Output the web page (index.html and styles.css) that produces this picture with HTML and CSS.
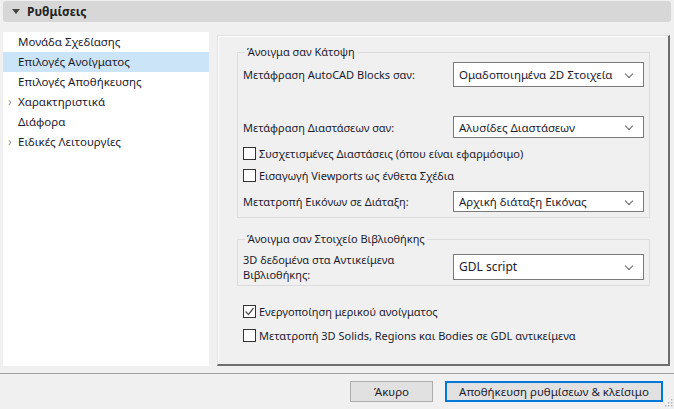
FILE: index.html
```html
<!DOCTYPE html>
<html lang="el">
<head>
    <meta charset="UTF-8">
    <title>Ρυθμίσεις</title>
    <link rel="stylesheet" href="styles.css">
</head>
<body>
    <div class="header">
        <svg class="caret" width="8" height="5" viewBox="0 0 8 5"><path d="M0 0h8L4 5z" fill="#444"/></svg>
        <span>Ρυθμίσεις</span>
    </div>

    <div class="main">
        <ul class="nav">
            <li>Μονάδα Σχεδίασης</li>
            <li class="active">Επιλογές Ανοίγματος</li>
            <li>Επιλογές Αποθήκευσης</li>
            <li class="has-sub">Χαρακτηριστικά</li>
            <li>Διάφορα</li>
            <li class="has-sub">Ειδικές Λειτουργίες</li>
        </ul>

        <div class="panel">
            <fieldset class="group group-plan">
                <legend>Άνοιγμα σαν Κάτοψη</legend>
                <div class="row row-blocks">
                    <label>Μετάφραση AutoCAD Blocks σαν:</label>
                    <div class="select sel-tall">Ομαδοποιημένα 2D Στοιχεία</div>
                </div>
                <div class="row row-dims">
                    <label>Μετάφραση Διαστάσεων σαν:</label>
                    <div class="select sel-mid">Αλυσίδες Διαστάσεων</div>
                </div>
                <div class="check check-first"><span class="box"></span>Συσχετισμένες Διαστάσεις (όπου είναι εφαρμόσιμο)</div>
                <div class="check"><span class="box"></span>Εισαγωγή Viewports ως ένθετα Σχέδια</div>
                <div class="row row-images">
                    <label>Μετατροπή Εικόνων σε Διάταξη:</label>
                    <div class="select sel-short">Αρχική διάταξη Εικόνας</div>
                </div>
            </fieldset>

            <fieldset class="group group-lib">
                <legend>Άνοιγμα σαν Στοιχείο Βιβλιοθήκης</legend>
                <div class="row row-lib">
                    <label class="two-line">3D δεδομένα στα Αντικείμενα<br>Βιβλιοθήκης:</label>
                    <div class="select sel-big">GDL script</div>
                </div>
            </fieldset>

            <div class="check check-partial"><span class="box checked"><svg width="11" height="11" viewBox="0 0 11 11"><path d="M1.5 5.5l3 3 5-6.5" fill="none" stroke="#555" stroke-width="1.3"/></svg></span>Ενεργοποίηση μερικού ανοίγματος</div>
            <div class="check check-solids"><span class="box"></span>Μετατροπή 3D Solids, Regions και Bodies σε GDL αντικείμενα</div>
        </div>
    </div>

    <div class="footer">
        <button type="button" class="btn">Άκυρο</button>
        <button type="button" class="btn btn-primary">Αποθήκευση ρυθμίσεων &amp; κλείσιμο</button>
        <svg class="grip" width="9" height="9" viewBox="0 0 9 9" fill="#b0b0b0">
            <rect x="7" y="1" width="1.4" height="1.4"/>
            <rect x="4" y="4" width="1.4" height="1.4"/><rect x="7" y="4" width="1.4" height="1.4"/>
            <rect x="1" y="7" width="1.4" height="1.4"/><rect x="4" y="7" width="1.4" height="1.4"/><rect x="7" y="7" width="1.4" height="1.4"/>
        </svg>
    </div>
</body>
</html>
```

FILE: styles.css
```css
* {
    box-sizing: border-box;
    margin: 0;
    padding: 0;
}

body {
    background: #f0f0f0;
    font-family: "Noto Sans", "Open Sans", sans-serif;
    font-size: 11px;
    color: #1c1c30;
    width: 674px;
    height: 409px;
    overflow: hidden;
}

.header {
    margin: 1px 3px 0;
    height: 21px;
    background: #d7d7d7;
    border-radius: 3px;
    display: flex;
    align-items: center;
    padding-left: 9px;
    font-weight: bold;
    font-size: 12px;
    color: #222;
}

.caret {
    margin-right: 7px;
}

.main {
    display: flex;
    margin-top: 10px;
    padding: 0 3px;
    height: 334px;
}

.nav {
    list-style: none;
    width: 206px;
    background: white;
    font-size: 11.5px;
}

.nav li {
    height: 20px;
    line-height: 20px;
    padding-left: 15px;
    position: relative;
}

.nav li.active {
    background: #cce4f7;
}

.nav li.has-sub::before {
    content: "›";
    position: absolute;
    left: 5px;
    color: #999;
    font-size: 12px;
}

.panel {
    margin-left: 8px;
    margin-top: 3px;
    width: 453px;
    border-top: 1px solid #e2e2e2;
    border-left: 1px solid #e2e2e2;
    border-right: 2px solid #6e6e6e;
    border-bottom: 2px solid #6e6e6e;
    box-shadow: inset 1px 1px 0 #fff;
    padding-left: 19px;
}

.group {
    width: 413px;
    border: 1px solid #dcdcdc;
    padding: 0 5px 5px;
}

.group legend {
    padding: 0 2px;
    margin-left: 2px;
    line-height: 16px;
}

.group-plan {
    margin-top: 8px;
}

.group-lib {
    margin-top: 13px;
    padding-bottom: 3px;
}

.row {
    display: flex;
    align-items: center;
    justify-content: space-between;
}

.row-blocks {
    margin-top: 2px;
}

.row-dims {
    margin-top: 29px;
}

.row-images {
    margin-top: 9px;
}

.row-lib {
    margin-top: 4px;
}

.two-line {
    line-height: 15px;
    padding-top: 1px;
}

.select {
    width: 191px;
    background: white;
    border: 1px solid #7a7a7a;
    padding-left: 5px;
    display: flex;
    align-items: center;
    position: relative;
    font-size: 11.5px;
}

.select::after {
    content: "";
    position: absolute;
    right: 11px;
    top: 50%;
    width: 5px;
    height: 5px;
    margin-top: -4px;
    border-right: 1px solid #666;
    border-bottom: 1px solid #666;
    transform: rotate(45deg);
}

.sel-tall { height: 25px; }
.sel-mid { height: 22px; }
.sel-short { height: 21px; }
.sel-big { height: 26px; font-size: 12px; }

.check {
    display: flex;
    align-items: center;
    height: 13px;
}

.group .check {
    margin-top: 9px;
}

.box {
    width: 13px;
    height: 13px;
    border: 1px solid #333;
    background: white;
    margin-right: 3px;
    display: flex;
    align-items: center;
    justify-content: center;
}

.check-partial {
    margin-top: 19px;
    margin-left: 6px;
}

.check-solids {
    margin-top: 11px;
    margin-left: 6px;
}

.footer {
    margin-top: 7px;
    border-top: 1px solid #a0a0a0;
    display: flex;
    justify-content: flex-end;
    padding-top: 7px;
    gap: 12px;
    height: 36px;
}

.btn {
    height: 21px;
    border: 1px solid #adadad;
    background: #e1e1e1;
    font-family: inherit;
    font-size: 11.5px;
    color: #1c1c30;
}

.btn:first-child {
    width: 83px;
}

.btn-primary {
    width: 218px;
    border: 2px solid #0078d7;
}

.grip {
    align-self: flex-end;
    margin: 0 1px 2px -11px;
}
```
